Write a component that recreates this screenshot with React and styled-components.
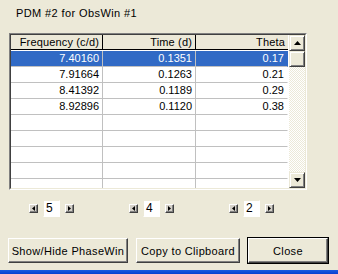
import React from 'react';
import styled, { createGlobalStyle } from 'styled-components';

const GlobalStyle = createGlobalStyle`
  html, body {
    margin: 0;
    padding: 0;
    background: #ece9d8;
  }
  body {
    font-family: "Liberation Sans", Arial, sans-serif;
    font-size: 11px;
    color: #000;
  }
`;

const Dialog = styled.div`
  width: 338px;
  height: 274px;
  display: flex;
  flex-direction: column;
  background: #ece9d8;
  position: relative;
  overflow: hidden;
`;

const Title = styled.div`
  height: 33px;
  padding: 7px 0 0 16px;
  box-sizing: border-box;
  line-height: 13px;
  letter-spacing: 0.4px;
`;

const Sunken = styled.div`
  margin-left: 9px;
  width: 298px;
  height: 157px;
  flex: none;
  box-sizing: border-box;
  border: 1px solid;
  border-color: #808080 #fff #fff #808080;
`;

const SunkenInner = styled.div`
  height: 100%;
  box-sizing: border-box;
  border: 1px solid;
  border-color: #404040 #ece9d8 #ece9d8 #404040;
  display: flex;
  background: #fff;
  overflow: hidden;
`;

const Table = styled.div`
  flex: 1;
  display: grid;
  grid-template-columns: 92px 93px 92px;
  grid-auto-rows: 16px;
  align-content: start;
  overflow: hidden;
`;

const HeadCell = styled.div`
  height: 15px;
  box-sizing: border-box;
  background: #ece9d8;
  border-bottom: 1px solid #000;
  border-right: 1px solid #000;
  text-align: right;
  padding-right: 3px;
  line-height: 14px;
  white-space: nowrap;
  letter-spacing: 0.15px;
  &:nth-child(3) { border-right: none; }
`;

const Cell = styled.div`
  box-sizing: border-box;
  border-bottom: 1px solid #c0c0c0;
  border-right: 1px solid ${p => (p.$last ? 'transparent' : '#c0c0c0')};
  background: ${p => (p.$sel ? '#316ac5' : '#fff')};
  color: ${p => (p.$sel ? '#fff' : '#000')};
  text-align: right;
  padding-right: 3px;
  line-height: 15px;
`;

const ScrollBar = styled.div`
  width: 16px;
  display: flex;
  flex-direction: column;
  background: repeating-conic-gradient(#fff 0 25%, #ece9d8 0 50%) 0 0 / 2px 2px;
`;

const Raised = styled.div`
  box-sizing: border-box;
  background: #ece9d8;
  border: 1px solid;
  border-color: #ece9d8 #404040 #404040 #ece9d8;
  box-shadow: inset 1px 1px #fff, inset -1px -1px #808080;
  display: flex;
  align-items: center;
  justify-content: center;
`;

const ScrollBtn = styled(Raised)`
  width: 16px;
  height: 16px;
  flex: none;
`;

const Track = styled.div`
  flex: 1;
`;

const SpinRow = styled.div`
  display: grid;
  grid-template-columns: repeat(3, 100px);
  padding-left: 29px;
  margin-top: 10px;
  height: 17px;
`;

const Spinner = styled.div`
  display: flex;
  align-items: center;
`;

const SpinBtn = styled.div`
  width: 9px;
  height: 9px;
  box-sizing: border-box;
  background: #d4d0c8;
  border: 1px solid;
  border-color: #fff #404040 #404040 #fff;
  box-shadow: inset -1px -1px #808080;
  display: flex;
  align-items: center;
  justify-content: center;
`;

const SpinBox = styled.div`
  width: 17px;
  height: 17px;
  margin: 0 5px 0 5px;
  box-sizing: border-box;
  background: #fff;
  border: 1px solid;
  border-color: #ece9d8 #fff #fff #ece9d8;
  padding-left: 2px;
  line-height: 15px;
  font-size: 12px;
`;

const ButtonRow = styled.div`
  display: flex;
  gap: 8px;
  padding-left: 8px;
  margin-top: 21px;
`;

const Button = styled.div`
  width: ${p => p.$w}px;
  height: 25px;
  box-sizing: border-box;
  background: #ece9d8;
  border: 1px solid;
  border-color: #fff #404040 #404040 #fff;
  box-shadow: inset -1px -1px #808080${p => (p.$default ? ', 0 0 0 1px #000' : '')};
  display: flex;
  align-items: center;
  justify-content: center;
  white-space: nowrap;
  letter-spacing: 0.35px;
`;

const BottomEdge = styled.div`
  position: absolute;
  left: 0;
  right: 0;
  bottom: 0;
  height: 4px;
  background: linear-gradient(#1c5ae0, #0a3ed0);
`;

const Tri = ({ dir, w = 7, h = 4 }) => {
  const pts = {
    up: `0,${h} ${w},${h} ${w / 2},0`,
    down: `0,0 ${w},0 ${w / 2},${h}`,
    left: `${w},0 ${w},${h} 0,${h / 2}`,
    right: `0,0 0,${h} ${w},${h / 2}`,
  }[dir];
  return (
    <svg width={w} height={h} viewBox={`0 0 ${w} ${h}`} style={{ display: 'block' }}>
      <polygon points={pts} fill="#000" />
    </svg>
  );
};

const rows = [
  ['7.40160', '0.1351', '0.17'],
  ['7.91664', '0.1263', '0.21'],
  ['8.41392', '0.1189', '0.29'],
  ['8.92896', '0.1120', '0.38'],
  ['', '', ''],
  ['', '', ''],
  ['', '', ''],
  ['', '', ''],
  ['', '', ''],
];

const spins = ['5', '4', '2'];

export default function App() {
  return (
    <>
      <GlobalStyle />
      <Dialog>
        <Title>PDM #2 for ObsWin #1</Title>
        <Sunken>
          <SunkenInner>
            <Table>
              <HeadCell>Frequency (c/d)</HeadCell>
              <HeadCell>Time (d)</HeadCell>
              <HeadCell>Theta</HeadCell>
              {rows.map((r, i) =>
                r.map((v, j) => (
                  <Cell key={`${i}-${j}`} $sel={i === 0} $last={j === 2}>
                    {v}
                  </Cell>
                ))
              )}
            </Table>
            <ScrollBar>
              <ScrollBtn><Tri dir="up" /></ScrollBtn>
              <ScrollBtn />
              <Track />
              <ScrollBtn><Tri dir="down" /></ScrollBtn>
            </ScrollBar>
          </SunkenInner>
        </Sunken>
        <SpinRow>
          {spins.map(s => (
            <Spinner key={s}>
              <SpinBtn><Tri dir="left" w={3} h={5} /></SpinBtn>
              <SpinBox>{s}</SpinBox>
              <SpinBtn><Tri dir="right" w={3} h={5} /></SpinBtn>
            </Spinner>
          ))}
        </SpinRow>
        <ButtonRow>
          <Button $w={120}>Show/Hide PhaseWin</Button>
          <Button $w={104}>Copy to Clipboard</Button>
          <Button $w={80} $default>Close</Button>
        </ButtonRow>
        <BottomEdge />
      </Dialog>
    </>
  );
}
